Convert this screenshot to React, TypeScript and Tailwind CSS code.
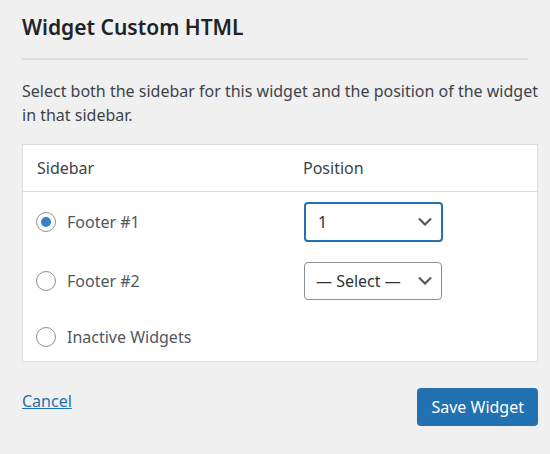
import React from "react";

const sidebars = [
  { name: "Footer #1", position: "1", checked: true },
  { name: "Footer #2", position: "— Select —", checked: false },
  { name: "Inactive Widgets", position: null, checked: false },
];

function Chevron() {
  return (
    <svg viewBox="0 0 20 20" className="w-[20px] h-[20px] text-[#50575e]" fill="currentColor">
      <path d="M5 6l5 5 5-5 2 1-7 7-7-7 2-1z" />
    </svg>
  );
}

function Radio({ checked }: { checked: boolean }) {
  return (
    <span className="w-[20px] h-[20px] rounded-full border border-[#8c8f94] bg-white flex items-center justify-center shrink-0">
      {checked && <span className="w-[10px] h-[10px] rounded-full bg-[#3582c4]" />}
    </span>
  );
}

export default function App() {
  return (
    <div
      className="w-[550px] h-[454px] bg-[#f0f0f1] pl-[22px] pr-[12px] pt-[12px]"
      style={{ fontFamily: '"Noto Sans", "Open Sans", sans-serif' }}
    >
      <h2 className="text-[21px] leading-[30px] font-semibold text-[#1d2327]">Widget Custom HTML</h2>

      <div className="mt-[16px] mr-[10px] h-[2px] bg-[#dcdcde]" />

      <p className="mt-[19px] text-[16px] leading-[24px] text-[#3c434a]">
        Select both the sidebar for this widget and the position of the widget in that sidebar.
      </p>

      <div className="mt-[17px] bg-white border border-[#dcdcde] text-[16px] text-[#3c434a]">
        <div className="grid grid-cols-[266px_1fr] h-[47px] items-center border-b border-[#dcdcde]">
          <span className="pl-[14px]">Sidebar</span>
          <span className="pl-[14px]">Position</span>
        </div>

        <div className="flex flex-col pt-[10px] pb-[12px]">
          {sidebars.map((s, i) => (
            <div
              key={s.name}
              className={`grid grid-cols-[266px_1fr] items-center ${i === 0 ? "h-[40px]" : i === 1 ? "h-[38px] mt-[20px]" : "h-[24px] mt-[25px]"}`}
            >
              <label className="flex items-center gap-[11px] pl-[13px] text-[#50575e]">
                <Radio checked={s.checked} />
                {s.name}
              </label>
              {s.position && (
                <div className="pl-[15px]">
                  <div
                    className={`flex items-center justify-between rounded-[4px] bg-white ${
                      s.checked
                        ? "w-[139px] h-[40px] border-2 border-[#2271b1] pl-[12px] pr-[6px]"
                        : "w-[138px] h-[38px] border border-[#8c8f94] pl-[11px] pr-[6px]"
                    }`}
                  >
                    <span className="text-[#2c3338] whitespace-nowrap">{s.position}</span>
                    <Chevron />
                  </div>
                </div>
              )}
            </div>
          ))}
        </div>
      </div>

      <div className="mt-[26px] flex items-start justify-between">
        <a href="#" className="mt-[1px] text-[16px] text-[#2271b1] underline">
          Cancel
        </a>
        <button className="h-[38px] px-[14px] rounded-[4px] bg-[#2271b1] text-white text-[16px]">
          Save Widget
        </button>
      </div>
    </div>
  );
}
